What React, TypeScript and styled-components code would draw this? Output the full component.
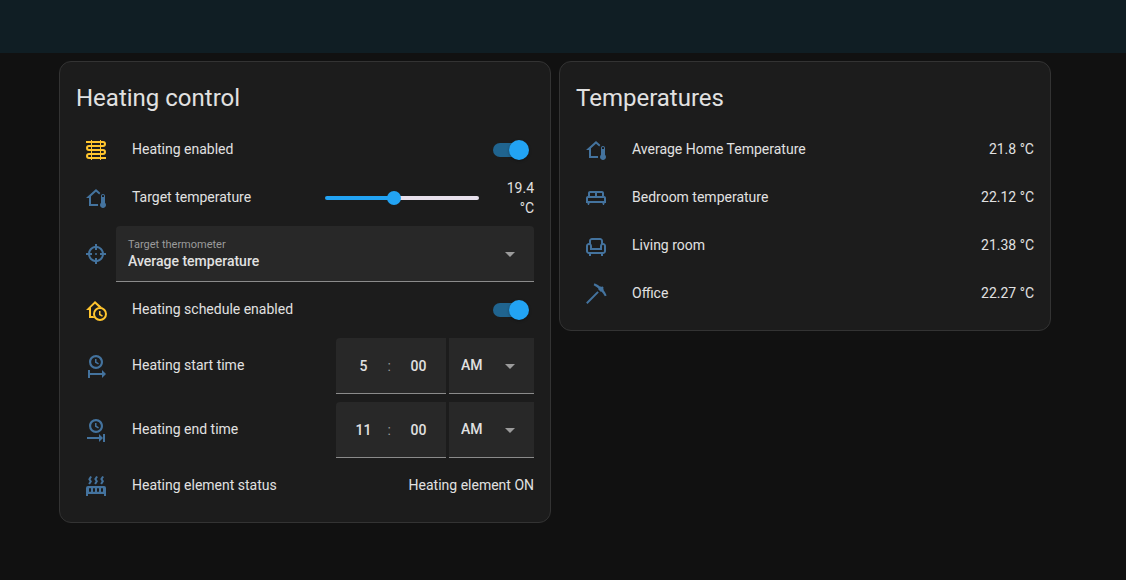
import React, { useState } from "react";
import styled, { createGlobalStyle, css } from "styled-components";

const colors = {
  page: "#111111",
  header: "#101e24",
  card: "#1c1c1c",
  border: "#333333",
  field: "#282828",
  line: "#8b8b8b",
  text: "#e1e1e1",
  muted: "#9b9b9b",
  accent: "#22a3f3",
  icon: "#44739e",
  iconOn: "#ffc52e",
};

const GlobalStyle = createGlobalStyle`
  *, *::before, *::after { box-sizing: border-box; }
  body {
    margin: 0;
    background: ${colors.page};
    color: ${colors.text};
    font-family: Roboto, "Noto Sans", sans-serif;
    font-size: 14px;
    line-height: 20px;
  }
`;

const Header = styled.header`
  height: 53px;
  background: ${colors.header};
`;

const Columns = styled.main`
  display: flex;
  justify-content: center;
  align-items: flex-start;
  gap: 8px;
  padding: 8px 24px 8px 8px;
`;

const Card = styled.section`
  flex: 1 1 0;
  min-width: 0;
  max-width: 492px;
  padding: 12px 16px 16px;
  background: ${colors.card};
  border: 1px solid ${colors.border};
  border-radius: 12px;
`;

const CardTitle = styled.h1`
  margin: 0 0 8px;
  font-size: 24px;
  font-weight: 400;
  line-height: 48px;
`;

const Rows = styled.div`
  display: flex;
  flex-direction: column;
  gap: 8px;
`;

const Row = styled.div`
  display: flex;
  align-items: center;
  min-height: 40px;
`;

const IconBox = styled.span<{ $on?: boolean }>`
  flex: none;
  display: flex;
  justify-content: center;
  width: 40px;
  color: ${(p) => (p.$on ? colors.iconOn : colors.icon)};
`;

const nameStyle = css`
  flex: 1;
  min-width: 0;
  padding: 0 16px;
  margin-bottom: 2px;
`;

const Name = styled.span`
  ${nameStyle}
`;

const NameLabel = styled.label`
  ${nameStyle}
`;

const Value = styled.span`
  margin-bottom: 2px;
  text-align: right;
`;

const Toggle = styled.input`
  appearance: none;
  position: relative;
  flex: none;
  display: flex;
  align-items: center;
  width: 36px;
  height: 20px;
  margin: 0 5px 0 0;
  cursor: pointer;

  &::before {
    content: "";
    width: 32px;
    height: 14px;
    border-radius: 7px;
    background: #20648f;
  }
  &::after {
    content: "";
    position: absolute;
    right: 0;
    width: 20px;
    height: 20px;
    border-radius: 50%;
    background: ${colors.accent};
    box-shadow: 0 1px 3px rgba(0, 0, 0, 0.3);
  }
  &:not(:checked)::before { background: #555555; }
  &:not(:checked)::after { right: 16px; background: #bbbbbb; }
`;

const Slider = styled.input`
  appearance: none;
  flex: none;
  width: 154px;
  height: 14px;
  margin: 0 10px 0 0;
  background: transparent;

  &::-webkit-slider-runnable-track {
    height: 4px;
    border-radius: 2px;
    background: linear-gradient(${colors.accent}, ${colors.accent}) left / var(--fill) 100% no-repeat #e7e0ec;
  }
  &::-webkit-slider-thumb {
    appearance: none;
    width: 14px;
    height: 14px;
    margin-top: -5px;
    border-radius: 50%;
    background: ${colors.accent};
  }
`;

const SliderValue = styled.output`
  flex: none;
  width: 45px;
  text-align: right;
`;

const Field = styled.div<{ $width?: number; $rounded?: boolean }>`
  display: grid;
  flex: ${(p) => (p.$width ? "none" : "1")};
  width: ${(p) => (p.$width ? `${p.$width}px` : "auto")};
  height: 56px;
  overflow: hidden;
  background: ${colors.field};
  border-bottom: 1px solid ${colors.line};
  border-radius: ${(p) => (p.$rounded ? "4px 4px 0 0" : "0")};

  > * { grid-area: 1 / 1; }
`;

const FieldLabel = styled.label`
  align-self: start;
  justify-self: start;
  padding: 11px 12px 0;
  color: ${colors.muted};
  font-size: 11px;
  line-height: 16px;
  pointer-events: none;
`;

const Select = styled.select<{ $labelled?: boolean }>`
  appearance: none;
  width: 100%;
  height: 100%;
  padding: ${(p) => (p.$labelled ? "14px 36px 0 12px" : "0 36px 2px 12px")};
  border: 0;
  background: transparent;
  color: ${colors.text};
  font: inherit;
  font-weight: 500;

  option { background: ${colors.field}; }
`;

const Arrow = styled.svg`
  align-self: center;
  justify-self: end;
  margin-right: 12px;
  fill: ${colors.muted};
  pointer-events: none;
`;

const TimeGroup = styled.div`
  display: flex;
  flex: none;
  gap: 3px;
`;

const TimeBox = styled.div`
  display: grid;
  grid-template: 1fr / 1fr 1fr;
  width: 110px;
  height: 56px;
  background: ${colors.field};
  border-bottom: 1px solid ${colors.line};
  border-radius: 4px 0 0 0;
`;

const TimeInput = styled.input<{ $column: number }>`
  grid-area: 1 / ${(p) => p.$column};
  min-width: 0;
  width: 100%;
  padding: 0;
  border: 0;
  background: transparent;
  color: ${colors.text};
  font: inherit;
  font-weight: 500;
  text-align: center;
`;

const Colon = styled.span`
  grid-area: 1 / 1;
  align-self: center;
  justify-self: end;
  color: ${colors.muted};
  pointer-events: none;
`;

const clockFace =
  "M12 1C8.14 1 5 4.14 5 8A7 7 0 0 0 12 15C15.86 15 19 11.87 19 8C19 4.14 15.86 1 12 1M12 3.15C14.67 3.15 16.85 5.32 16.85 8S14.67 12.85 12 12.85A4.85 4.85 0 0 1 7.15 8A4.85 4.85 0 0 1 12 3.15M11 5V8.69L14.19 10.53L14.94 9.23L12.5 7.82V5";

const paths = {
  homeThermometer:
    "M19 8C20.11 8 21 8.9 21 10V16.76C21.61 17.31 22 18.11 22 19C22 20.66 20.66 22 19 22C17.34 22 16 20.66 16 19C16 18.11 16.39 17.31 17 16.76V10C17 8.9 17.9 8 19 8M19 9C18.45 9 18 9.45 18 10V11H20V10C20 9.45 19.55 9 19 9M12 5.69L7 10.19V18H14.1L14 19L14.1 20H5V12H2L12 3L16.4 6.96C15.89 7.4 15.5 7.97 15.25 8.61L12 5.69Z",
  target:
    "M11,2V4.07C7.38,4.53 4.53,7.38 4.07,11H2V13H4.07C4.53,16.62 7.38,19.47 11,19.93V22H13V19.93C16.62,19.47 19.47,16.62 19.93,13H22V11H19.93C19.47,7.38 16.62,4.53 13,4.07V2M11,6.08V8H13V6.09C15.5,6.5 17.5,8.5 17.92,11H16V13H17.91C17.5,15.5 15.5,17.5 13,17.92V16H11V17.91C8.5,17.5 6.5,15.5 6.08,13H8V11H6.09C6.5,8.5 8.5,6.5 11,6.08M12,11A1,1 0 0,0 11,12A1,1 0 0,0 12,13A1,1 0 0,0 13,12A1,1 0 0,0 12,11Z",
  clockStart: clockFace + "M4 16V24H6V21H18V24L22 20L18 16V19H6V16",
  clockEnd: clockFace + "M15 16V19H3V21H15V24L19 20V24H21V16H19V20L15 16",
  radiator:
    "M7.95,3L6.53,5.19L7.95,7.4H7.94L5.95,10.5L4.22,9.6L5.64,7.39L4.22,5.19L6.22,2.09L7.95,3M13.95,2.89L12.53,5.1L13.95,7.3L13.94,7.31L11.95,10.4L10.22,9.5L11.64,7.3L10.22,5.1L12.22,2L13.95,2.89M20,2.89L18.56,5.1L20,7.3V7.31L18,10.4L16.25,9.5L17.67,7.3L16.25,5.1L18.25,2L20,2.89M2,22V14A2,2 0 0,1 4,12H20A2,2 0 0,1 22,14V22H20V20H4V22H2M6,14A1,1 0 0,0 5,15V17A1,1 0 0,0 6,18A1,1 0 0,0 7,17V15A1,1 0 0,0 6,14M10,14A1,1 0 0,0 9,15V17A1,1 0 0,0 10,18A1,1 0 0,0 11,17V15A1,1 0 0,0 10,14M14,14A1,1 0 0,0 13,15V17A1,1 0 0,0 14,18A1,1 0 0,0 15,17V15A1,1 0 0,0 14,14M18,14A1,1 0 0,0 17,15V17A1,1 0 0,0 18,18A1,1 0 0,0 19,17V15A1,1 0 0,0 18,14Z",
  bed: "M20 10V7C20 5.9 19.11 5 18 5H6C4.9 5 4 5.9 4 7V10C2.9 10 2 10.9 2 12V17H3.33L4 19H5L5.67 17H18.33L19 19H20L20.67 17H22V12C22 10.9 21.11 10 20 10M11 10H6V7H11V10M18 10H13V7H18V10M20 15H4V12H20V15Z",
  sofa: "M19 9V7C19 5.35 17.65 4 16 4H8C6.35 4 5 5.35 5 7V9C3.35 9 2 10.35 2 12V17C2 18.65 3.35 20 5 20V22H7V20H17V22H19V20C20.65 20 22 18.65 22 17V12C22 10.35 20.65 9 19 9M7 7C7 6.45 7.45 6 8 6H16C16.55 6 17 6.45 17 7V9.78C16.39 10.33 16 11.12 16 12V14H8V12C8 11.12 7.61 10.33 7 9.78V7M20 17C20 17.55 19.55 18 19 18H5C4.45 18 4 17.55 4 17V12C4 11.45 4.45 11 5 11C5.55 11 6 11.45 6 12V16H18V12C18 11.45 18.45 11 19 11C19.55 11 20 11.45 20 12V17Z",
  pickaxe:
    "M14.79,10.62L3.5,21.9L2.1,20.5L13.38,9.21L14.79,10.62M19.27,7.73L19.86,7.14L19.07,6.35L19.71,5.71L18.29,4.29L17.65,4.93L16.86,4.14L16.27,4.73C14.53,3.31 12.57,2.17 10.47,1.37L9.64,3.16C11.39,4.08 13,5.19 14.5,6.5L14,7L17,10L17.5,9.5C18.81,11 19.92,12.61 20.84,14.36L22.63,13.53C21.83,11.43 20.69,9.47 19.27,7.73Z",
};

function Icon({ name, on }: { name: keyof typeof paths | "coil" | "homeClock"; on?: boolean }) {
  return (
    <IconBox $on={on}>
      <svg width="24" height="24" viewBox="0 0 24 24" aria-hidden="true">
        {name === "coil" ? (
          <g fill="none" stroke="currentColor">
            <path strokeWidth="2" d="M2 4H19a2 2 0 0 1 0 4H5a2 2 0 0 0 0 4H19a2 2 0 0 1 0 4H5a2 2 0 0 0 0 4H22" />
            <path d="M7.5 2V22M16.5 2V22" />
          </g>
        ) : name === "homeClock" ? (
          <g fill="none" stroke="currentColor" strokeWidth="2">
            <circle cx="16" cy="16" r="6" />
            <path strokeWidth="1.5" d="M15.75 13V16.5L18.5 18.2" />
            <path
              fill="currentColor"
              stroke="none"
              d="M2 12L11 3L18.5 9.8C17.4 9.3 16 9.1 14.7 9.3L11 5.8L7 9.6V18H9.3L10.3 20H5V12Z"
            />
          </g>
        ) : (
          <path fill="currentColor" d={paths[name]} />
        )}
      </svg>
    </IconBox>
  );
}

function DropArrow() {
  return (
    <Arrow width="24" height="24" viewBox="0 0 24 24" aria-hidden="true">
      <path d="M7 10L12 15L17 10Z" />
    </Arrow>
  );
}

function ToggleRow({ id, icon, name }: { id: string; icon: "coil" | "homeClock"; name: string }) {
  const [on, setOn] = useState(true);
  return (
    <Row>
      <Icon name={icon} on={on} />
      <NameLabel htmlFor={id}>{name}</NameLabel>
      <Toggle id={id} type="checkbox" role="switch" checked={on} onChange={(e) => setOn(e.target.checked)} />
    </Row>
  );
}

function TemperatureRow() {
  const min = 15;
  const max = 25;
  const [value, setValue] = useState(19.4);
  const fill = `${((value - min) / (max - min)) * 100}%`;
  return (
    <Row>
      <Icon name="homeThermometer" />
      <NameLabel htmlFor="target-temperature">Target temperature</NameLabel>
      <Slider
        id="target-temperature"
        type="range"
        min={min}
        max={max}
        step={0.1}
        value={value}
        onChange={(e) => setValue(Number(e.target.value))}
        style={{ "--fill": fill } as React.CSSProperties}
      />
      <SliderValue htmlFor="target-temperature">{value.toFixed(1)} °C</SliderValue>
    </Row>
  );
}

function TimeRow({ id, icon, name, hour }: { id: string; icon: "clockStart" | "clockEnd"; name: string; hour: string }) {
  return (
    <Row>
      <Icon name={icon} />
      <NameLabel htmlFor={id}>{name}</NameLabel>
      <TimeGroup>
        <TimeBox>
          <TimeInput id={id} $column={1} inputMode="numeric" maxLength={2} defaultValue={hour} />
          <Colon>:</Colon>
          <TimeInput $column={2} inputMode="numeric" maxLength={2} defaultValue="00" aria-label={`${name} minutes`} />
        </TimeBox>
        <Field $width={85}>
          <Select aria-label={`${name} AM or PM`} defaultValue="AM">
            <option>AM</option>
            <option>PM</option>
          </Select>
          <DropArrow />
        </Field>
      </TimeGroup>
    </Row>
  );
}

const sensors = [
  { icon: "homeThermometer", name: "Average Home Temperature", value: "21.8 °C" },
  { icon: "bed", name: "Bedroom temperature", value: "22.12 °C" },
  { icon: "sofa", name: "Living room", value: "21.38 °C" },
  { icon: "pickaxe", name: "Office", value: "22.27 °C" },
] as const;

export default function App() {
  return (
    <>
      <GlobalStyle />
      <Header />
      <Columns>
        <Card>
          <CardTitle>Heating control</CardTitle>
          <Rows>
            <ToggleRow id="heating" icon="coil" name="Heating enabled" />
            <TemperatureRow />
            <Row>
              <Icon name="target" />
              <Field $rounded>
                <Select id="thermometer" $labelled>
                  <option>Average temperature</option>
                  <option>Bedroom temperature</option>
                </Select>
                <FieldLabel htmlFor="thermometer">Target thermometer</FieldLabel>
                <DropArrow />
              </Field>
            </Row>
            <ToggleRow id="schedule" icon="homeClock" name="Heating schedule enabled" />
            <TimeRow id="start" icon="clockStart" name="Heating start time" hour="5" />
            <TimeRow id="end" icon="clockEnd" name="Heating end time" hour="11" />
            <Row>
              <Icon name="radiator" />
              <Name>Heating element status</Name>
              <Value>Heating element ON</Value>
            </Row>
          </Rows>
        </Card>
        <Card>
          <CardTitle>Temperatures</CardTitle>
          <Rows>
            {sensors.map((s) => (
              <Row key={s.name}>
                <Icon name={s.icon} />
                <Name>{s.name}</Name>
                <Value>{s.value}</Value>
              </Row>
            ))}
          </Rows>
        </Card>
      </Columns>
    </>
  );
}
